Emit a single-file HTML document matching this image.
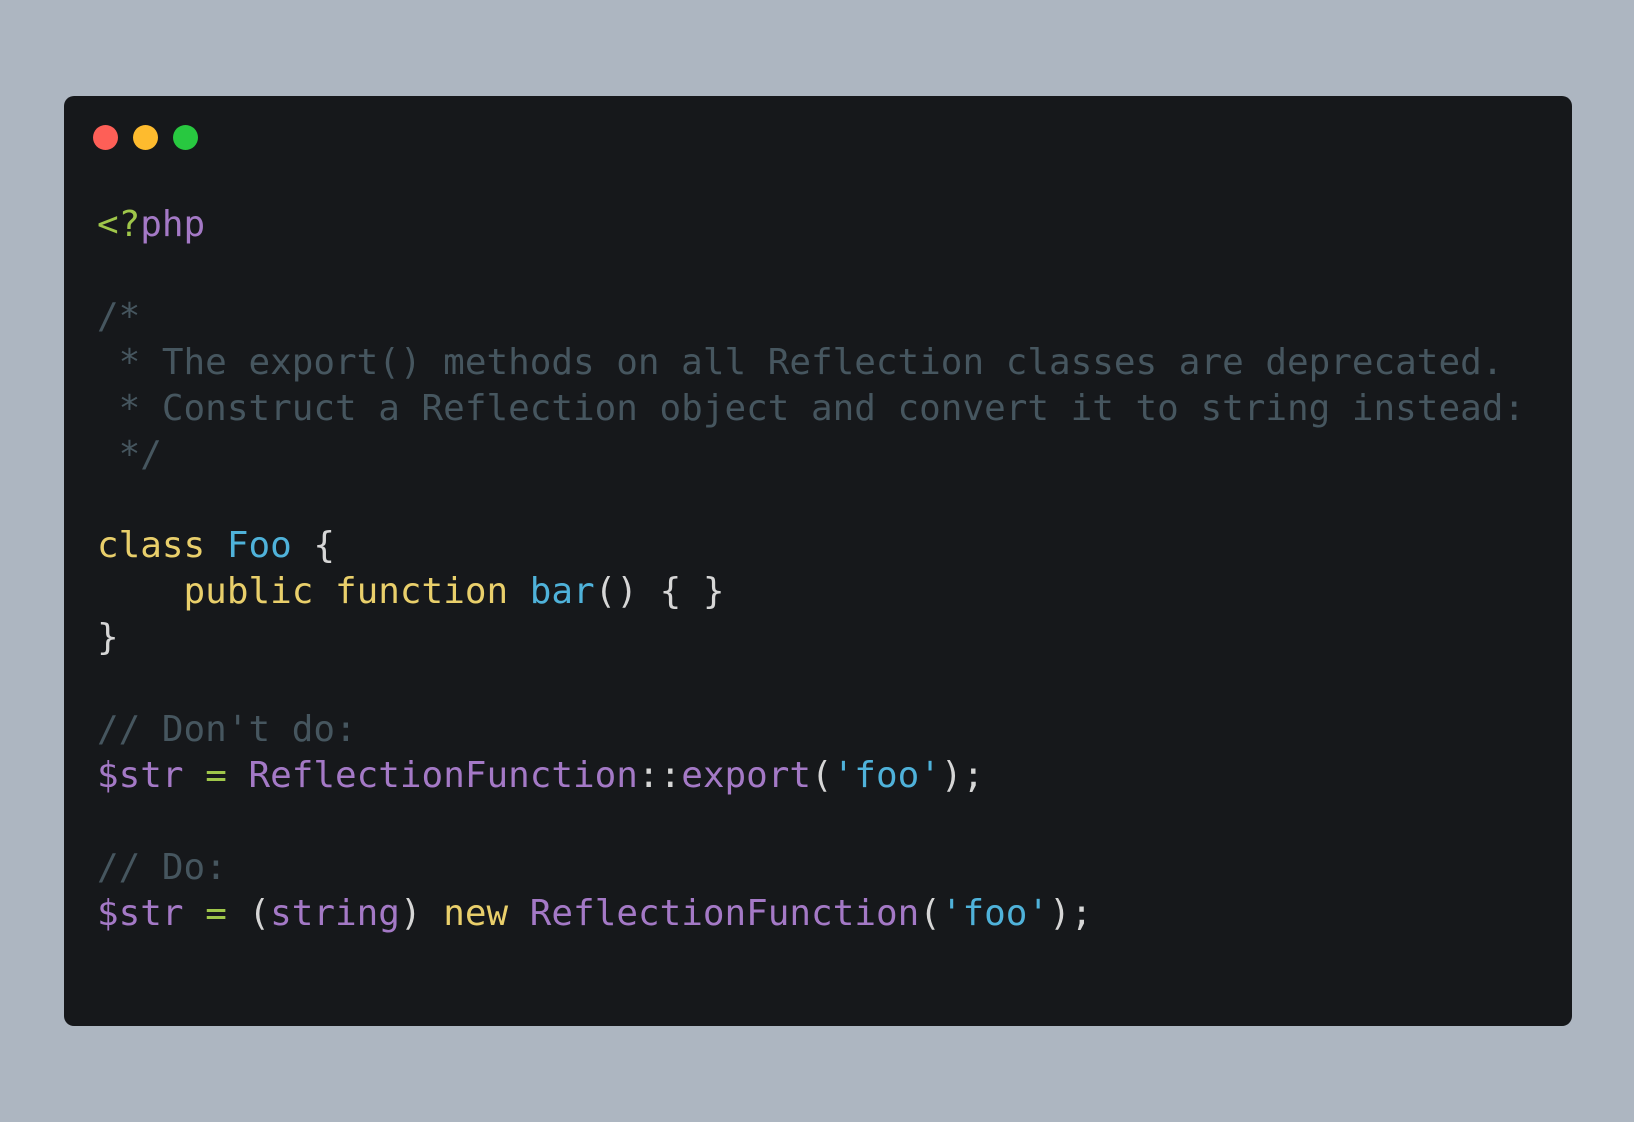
<!DOCTYPE html>
<html><head><style>
html,body{margin:0;padding:0;width:1634px;height:1122px;background:#adb6c1;overflow:hidden}
.win{position:absolute;left:64px;top:96px;width:1508px;height:930px;background:#16181b;border-radius:10px}
.dot{position:absolute;top:125px;width:25px;height:25px;border-radius:50%}
pre{position:absolute;left:97px;top:202px;margin:0;font-family:"DejaVu Sans Mono","Liberation Mono",monospace;font-size:35.95px;line-height:45.9px;color:#d6d6d6}
.c{color:#46565f}.g{color:#9fc64a}.p{color:#a479c6}.y{color:#e9cf6b}.b{color:#4fb2da}
</style></head><body>
<div class="win"></div>
<div class="dot" style="left:93px;background:#fe5f57"></div>
<div class="dot" style="left:133px;background:#febb2e"></div>
<div class="dot" style="left:173px;background:#28c840"></div>
<pre><span class="g">&lt;?</span><span class="p">php</span>

<span class="c">/*
 * The export() methods on all Reflection classes are deprecated.
 * Construct a Reflection object and convert it to string instead:
 */</span>

<span class="y">class</span> <span class="b">Foo</span> {
    <span class="y">public</span> <span class="y">function</span> <span class="b">bar</span>() { }
}

<span class="c">// Don't do:</span>
<span class="p">$str</span> <span class="g">=</span> <span class="p">ReflectionFunction</span>::<span class="p">export</span>(<span class="b">'foo'</span>);

<span class="c">// Do:</span>
<span class="p">$str</span> <span class="g">=</span> (<span class="p">string</span>) <span class="y">new</span> <span class="p">ReflectionFunction</span>(<span class="b">'foo'</span>);</pre>
</body></html>
